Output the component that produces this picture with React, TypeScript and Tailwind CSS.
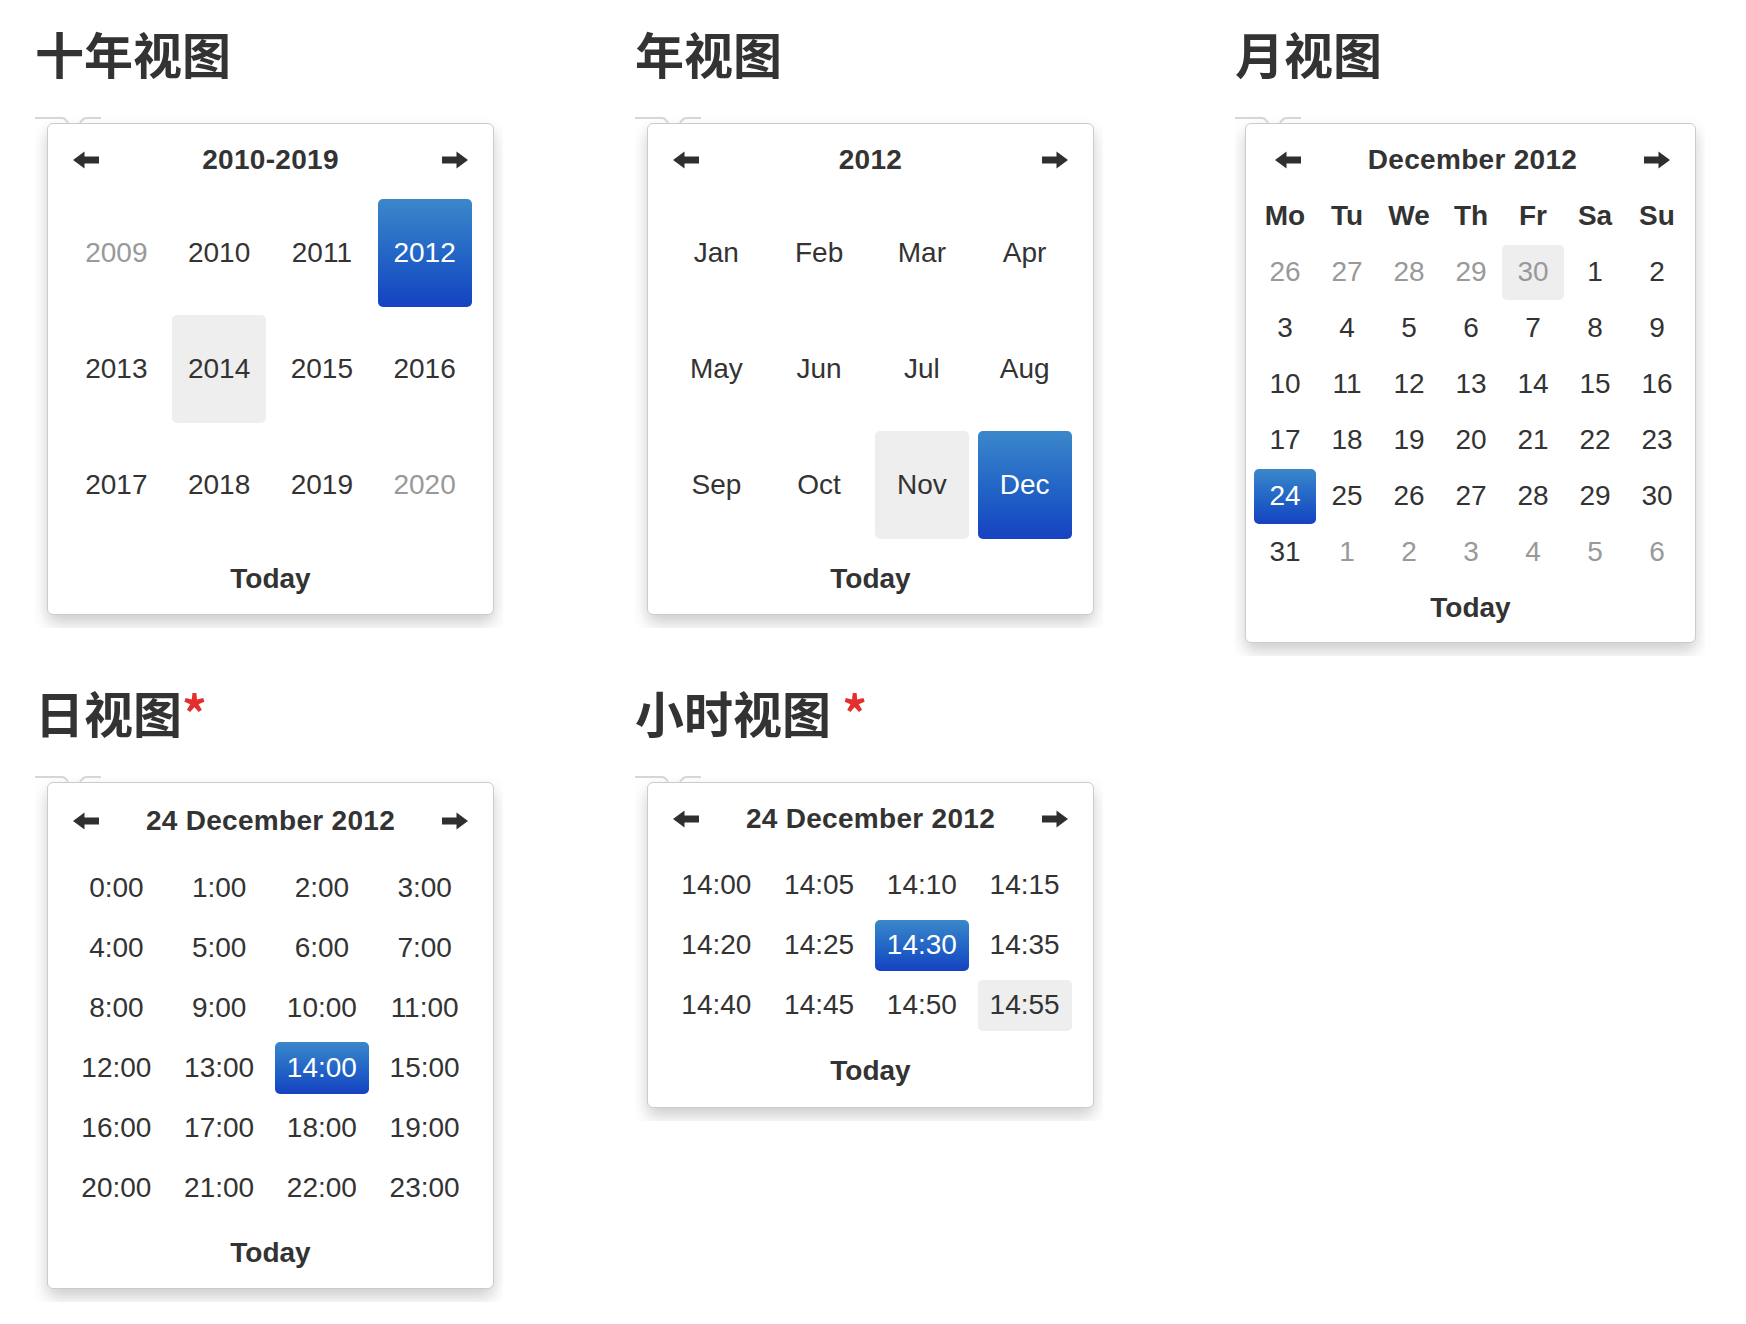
import React from "react";

type V = "n" | "old" | "active" | "hover" | "oldhover";

const cellText: Record<V, string> = {
  n: "text-[#333333]",
  old: "text-[#999999]",
  active: "text-white bg-linear-to-b from-[#3b87ca] to-[#1741c1]",
  hover: "bg-[#eeeeee]",
  oldhover: "text-[#999999] bg-[#eeeeee]",
};

const ArrowLeft = () => (
  <svg width="26" height="18" viewBox="0 0 26 18" className="block">
    <path d="M0 9 L11.5 0.5 L11.5 5.5 L26 5.5 L26 12.5 L11.5 12.5 L11.5 17.5 Z" fill="#2f2f2f" />
  </svg>
);

const ArrowRight = () => (
  <svg width="26" height="18" viewBox="0 0 26 18" className="block">
    <path d="M26 9 L14.5 0.5 L14.5 5.5 L0 5.5 L0 12.5 L14.5 12.5 L14.5 17.5 Z" fill="#2f2f2f" />
  </svg>
);

const Caret = () => (
  <svg width="70" height="8" viewBox="0 0 70 8" className="absolute left-0 top-0">
    <path d="M0 2 H27 Q30 2 33 7" fill="none" stroke="#d6d6d6" strokeWidth="2" />
    <path d="M45 7 Q48 2 52 2 H66" fill="none" stroke="#d6d6d6" strokeWidth="2" />
  </svg>
);

function Picker({ className, wrap, children }: { className: string; wrap: string; children: React.ReactNode }) {
  return (
    <div className={"relative w-fit overflow-hidden pr-[9px] pt-[7px] pb-[13px] " + wrap}>
      <Caret />
      <div
        className={
          "bg-white border border-[#cbcbcb] rounded-[6px] shadow-[0_8px_16px_rgba(0,0,0,0.2)] font-['Liberation_Sans',Arial,sans-serif] text-[#333333] " +
          className
        }
      >
        {children}
      </div>
    </div>
  );
}

function Header({ title, className }: { title: string; className: string }) {
  return (
    <div className={"grid grid-cols-[26px_1fr_26px] items-center " + className}>
      <ArrowLeft />
      <div className="text-center text-[28px] font-bold tracking-[0.3px] leading-none">{title}</div>
      <ArrowRight />
    </div>
  );
}

function Today({ className }: { className: string }) {
  return (
    <div className={"flex items-center justify-center text-[28px] font-bold leading-none " + className}>Today</div>
  );
}

function Heading({ text, star }: { text: string; star?: string }) {
  return (
    <h2 className="font-['Noto_Sans_CJK_SC',sans-serif] text-[49px] leading-[56px] font-bold text-[#333333] whitespace-pre">
      {text}
      {star !== undefined && <span className="text-[#e3302c]">{star}</span>}
    </h2>
  );
}

const decade: [string, V][] = [
  ["2009", "old"], ["2010", "n"], ["2011", "n"], ["2012", "active"],
  ["2013", "n"], ["2014", "hover"], ["2015", "n"], ["2016", "n"],
  ["2017", "n"], ["2018", "n"], ["2019", "n"], ["2020", "old"],
];

const months: [string, V][] = [
  ["Jan", "n"], ["Feb", "n"], ["Mar", "n"], ["Apr", "n"],
  ["May", "n"], ["Jun", "n"], ["Jul", "n"], ["Aug", "n"],
  ["Sep", "n"], ["Oct", "n"], ["Nov", "hover"], ["Dec", "active"],
];

const dayNames = ["Mo", "Tu", "We", "Th", "Fr", "Sa", "Su"];

const days: [string, V][] = [
  ["26", "old"], ["27", "old"], ["28", "old"], ["29", "old"], ["30", "oldhover"], ["1", "n"], ["2", "n"],
  ["3", "n"], ["4", "n"], ["5", "n"], ["6", "n"], ["7", "n"], ["8", "n"], ["9", "n"],
  ["10", "n"], ["11", "n"], ["12", "n"], ["13", "n"], ["14", "n"], ["15", "n"], ["16", "n"],
  ["17", "n"], ["18", "n"], ["19", "n"], ["20", "n"], ["21", "n"], ["22", "n"], ["23", "n"],
  ["24", "active"], ["25", "n"], ["26", "n"], ["27", "n"], ["28", "n"], ["29", "n"], ["30", "n"],
  ["31", "n"], ["1", "old"], ["2", "old"], ["3", "old"], ["4", "old"], ["5", "old"], ["6", "old"],
];

const hours: [string, V][] = Array.from({ length: 24 }, (_, i) => [`${i}:00`, i === 14 ? "active" : "n"] as [string, V]);

const minutes: [string, V][] = Array.from({ length: 12 }, (_, i) => {
  const m = String(i * 5).padStart(2, "0");
  const v: V = i === 6 ? "active" : i === 11 ? "hover" : "n";
  return [`14:${m}`, v] as [string, V];
});

export default function App() {
  return (
    <div className="min-h-[1324px] w-full overflow-hidden bg-white pt-[25px] pl-[35px]">
      <div className="grid grid-cols-[600px_600px_auto] gap-y-[28px] items-start">
        {/* Decade view */}
        <div className="flex flex-col">
          <Heading text="十年视图" />
          <div className="mt-[35px]">
            <Picker className="w-[447px]" wrap="pl-[12px]">
              <Header title="2010-2019" className="h-[71px] px-[25px]" />
              <div className="grid grid-cols-4 px-[17px]">
                {decade.map(([t, v], i) => (
                  <div key={i} className="h-[116px] flex items-center justify-center">
                    <div className={"w-[94px] h-[108px] rounded-[5px] flex items-center justify-center text-[28px] leading-none " + cellText[v]}>
                      {t}
                    </div>
                  </div>
                ))}
              </div>
              <Today className="h-[71px]" />
            </Picker>
          </div>
        </div>

        {/* Year view */}
        <div className="flex flex-col">
          <Heading text="年视图" />
          <div className="mt-[35px]">
            <Picker className="w-[447px]" wrap="pl-[12px]">
              <Header title="2012" className="h-[71px] px-[25px]" />
              <div className="grid grid-cols-4 px-[17px]">
                {months.map(([t, v], i) => (
                  <div key={i} className="h-[116px] flex items-center justify-center">
                    <div className={"w-[94px] h-[108px] rounded-[5px] flex items-center justify-center text-[28px] leading-none " + cellText[v]}>
                      {t}
                    </div>
                  </div>
                ))}
              </div>
              <Today className="h-[71px]" />
            </Picker>
          </div>
        </div>

        {/* Month view */}
        <div className="flex flex-col">
          <Heading text="月视图" />
          <div className="mt-[35px]">
            <Picker className="w-[451px]" wrap="pl-[10px]">
              <Header title="December 2012" className="h-[72px] pl-[29px] pr-[25px]" />
              <div className="grid grid-cols-[repeat(7,62px)] pl-[8px]">
                {dayNames.map((d) => (
                  <div key={d} className="h-[40px] flex items-center justify-center text-[28px] font-bold leading-none">
                    {d}
                  </div>
                ))}
              </div>
              <div className="grid grid-cols-[repeat(7,62px)] pl-[8px] mt-[8px]">
                {days.map(([t, v], i) => (
                  <div key={i} className="h-[56px] flex items-center justify-center">
                    <div className={"w-[62px] h-[55px] rounded-[5px] flex items-center justify-center text-[28px] leading-none " + cellText[v]}>
                      {t}
                    </div>
                  </div>
                ))}
              </div>
              <Today className="h-[56px]" />
              <div className="h-[6px]" />
            </Picker>
          </div>
        </div>

        {/* Day view */}
        <div className="flex flex-col">
          <Heading text="日视图" star="*" />
          <div className="mt-[35px]">
            <Picker className="w-[447px]" wrap="pl-[12px]">
              <Header title="24 December 2012" className="h-[75px] px-[25px]" />
              <div className="grid grid-cols-4 px-[17px]">
                {hours.map(([t, v], i) => (
                  <div key={i} className="h-[60px] flex items-center justify-center">
                    <div className={"w-[94px] h-[52px] rounded-[5px] flex items-center justify-center text-[28px] leading-none " + cellText[v]}>
                      {t}
                    </div>
                  </div>
                ))}
              </div>
              <Today className="h-[70px]" />
            </Picker>
          </div>
        </div>

        {/* Hour view */}
        <div className="flex flex-col">
          <Heading text="小时视图" star=" *" />
          <div className="mt-[35px]">
            <Picker className="w-[447px]" wrap="pl-[12px]">
              <Header title="24 December 2012" className="h-[72px] px-[25px]" />
              <div className="grid grid-cols-4 px-[17px]">
                {minutes.map(([t, v], i) => (
                  <div key={i} className="h-[60px] flex items-center justify-center">
                    <div className={"w-[94px] h-[51px] rounded-[5px] flex items-center justify-center text-[28px] leading-none " + cellText[v]}>
                      {t}
                    </div>
                  </div>
                ))}
              </div>
              <Today className="h-[72px]" />
            </Picker>
          </div>
        </div>

        <div />
      </div>
    </div>
  );
}
